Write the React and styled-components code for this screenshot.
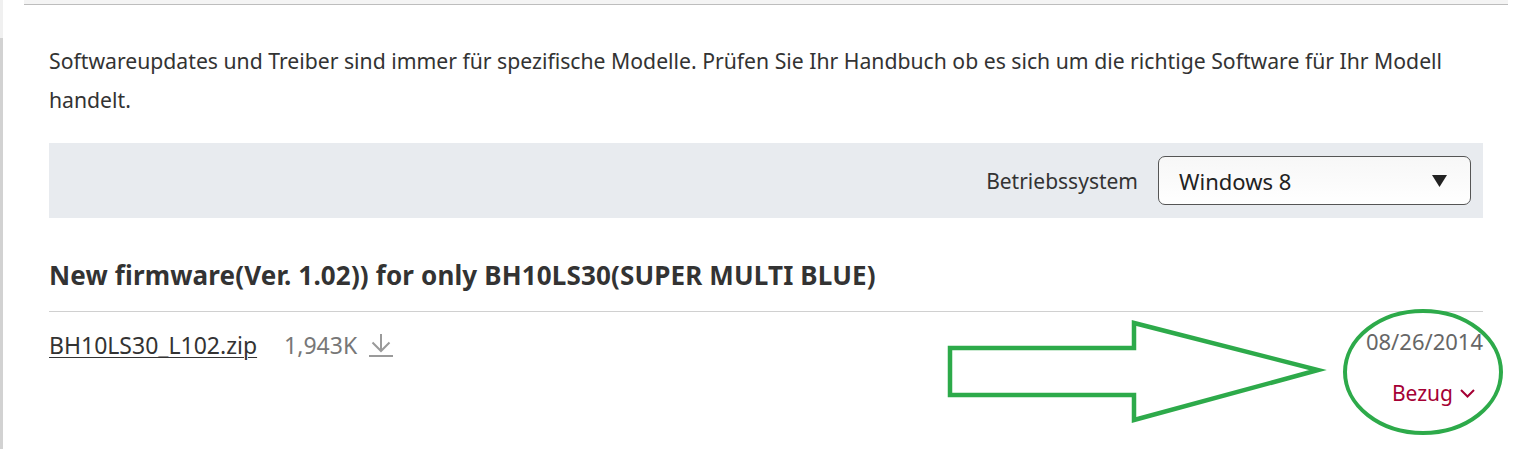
import React from "react";
import styled, { createGlobalStyle } from "styled-components";

const GlobalStyle = createGlobalStyle`
  html, body {
    margin: 0;
    padding: 0;
    background: #fff;
  }
  body {
    font-family: "Noto Sans", "Open Sans", Arial, sans-serif;
    color: #333;
  }
`;

const Page = styled.div`
  position: relative;
  display: flex;
  width: 1521px;
  height: 449px;
  overflow: hidden;
`;

const Rail = styled.div`
  flex: 0 0 3px;
  background: linear-gradient(to bottom, #f0f0f0 0, #f0f0f0 38px, #d2d2d2 38px);
`;

const Main = styled.div`
  flex: 1;
  display: flex;
  flex-direction: column;
`;

const TopRule = styled.div`
  height: 4px;
  margin: 0 13px 0 21px;
  background: #f4f4f4;
  border-bottom: 1px solid #bdbdbd;
`;

const Content = styled.div`
  padding: 0 38px 0 46px;
`;

const Intro = styled.p`
  margin: 36px 0 0;
  font-size: 21.2px;
  line-height: 39px;
  color: #333;
`;

const FilterBar = styled.div`
  margin-top: 24px;
  height: 75px;
  box-sizing: border-box;
  padding: 0 12px;
  display: flex;
  align-items: center;
  justify-content: flex-end;
  gap: 20px;
  background: #e8ebef;
`;

const FilterLabel = styled.span`
  font-size: 21px;
  color: #333;
`;

const Select = styled.div`
  width: 313px;
  height: 49px;
  box-sizing: border-box;
  display: flex;
  align-items: center;
  justify-content: space-between;
  padding: 0 23px 0 20px;
  border: 1px solid #555;
  border-radius: 7px;
  background: linear-gradient(to bottom, #f7f7f7, #fff);
  font-size: 22px;
  color: #222;
`;

const Title = styled.h2`
  margin: 40px 0 0;
  padding-bottom: 19px;
  border-bottom: 1px solid #d0d0d0;
  font-size: 26px;
  letter-spacing: 0.15px;
  line-height: 34px;
  font-weight: 700;
  color: #333;
`;

const FileRow = styled.div`
  display: flex;
  justify-content: space-between;
  align-items: flex-start;
  padding-top: 14px;
`;

const FileInfo = styled.div`
  display: flex;
  align-items: center;
  margin-top: 4px;
  height: 30px;
`;

const FileLink = styled.a`
  font-size: 23px;
  color: #333;
  text-decoration: underline;
  text-underline-offset: 3px;
  text-decoration-thickness: 1px;
`;

const FileSize = styled.span`
  margin-left: 27px;
  font-size: 23px;
  color: #777;
`;

const DownloadIcon = styled.svg`
  margin-left: 12px;
  width: 24px;
  height: 24px;
`;

const Meta = styled.div`
  display: flex;
  flex-direction: column;
  align-items: flex-end;
`;

const Date = styled.span`
  font-size: 22px;
  line-height: 30px;
  color: #666;
`;

const Toggle = styled.span`
  display: flex;
  align-items: center;
  gap: 7px;
  margin: 22px 8px 0 0;
  font-size: 21px;
  line-height: 30px;
  color: #a50034;
`;

const Annotation = styled.svg`
  position: absolute;
  left: 0;
  top: 0;
  pointer-events: none;
`;

export default function App() {
  return (
    <>
      <GlobalStyle />
      <Page>
        <Rail />
        <Main>
          <TopRule />
          <Content>
            <Intro>
              Softwareupdates und Treiber sind immer für spezifische Modelle. Prüfen Sie Ihr Handbuch ob es sich um die richtige Software für Ihr Modell handelt.
            </Intro>

            <FilterBar>
              <FilterLabel>Betriebssystem</FilterLabel>
              <Select>
                <span>Windows 8</span>
                <svg width="15" height="12" viewBox="0 0 15 12">
                  <polygon points="0,0 15,0 7.5,12" fill="#222" />
                </svg>
              </Select>
            </FilterBar>

            <Title>New firmware(Ver. 1.02)) for only BH10LS30(SUPER MULTI BLUE)</Title>

            <FileRow>
              <FileInfo>
                <FileLink>BH10LS30_L102.zip</FileLink>
                <FileSize>1,943K</FileSize>
                <DownloadIcon viewBox="0 0 24 24" fill="none" stroke="#9a9a9a" strokeWidth="2">
                  <path d="M12 1v17" />
                  <path d="M3.5 9.5 12 18l8.5-8.5" />
                  <path d="M0 23h24" />
                </DownloadIcon>
              </FileInfo>
              <Meta>
                <Date>08/26/2014</Date>
                <Toggle>
                  Bezug
                  <svg width="15" height="9" viewBox="0 0 15 9" fill="none" stroke="#a50034" strokeWidth="2">
                    <path d="M1 1l6.5 6.5L14 1" />
                  </svg>
                </Toggle>
              </Meta>
            </FileRow>
          </Content>
        </Main>

        <Annotation width="1521" height="449" viewBox="0 0 1521 449">
          <polygon
            points="950,348 1134,348 1134,323 1318,370 1134,420 1134,395 950,395"
            fill="none"
            stroke="#2daa4a"
            strokeWidth="4.5"
            strokeLinejoin="miter"
          />
          <ellipse cx="1423" cy="372" rx="78" ry="61" fill="none" stroke="#2daa4a" strokeWidth="4" />
        </Annotation>
      </Page>
    </>
  );
}
